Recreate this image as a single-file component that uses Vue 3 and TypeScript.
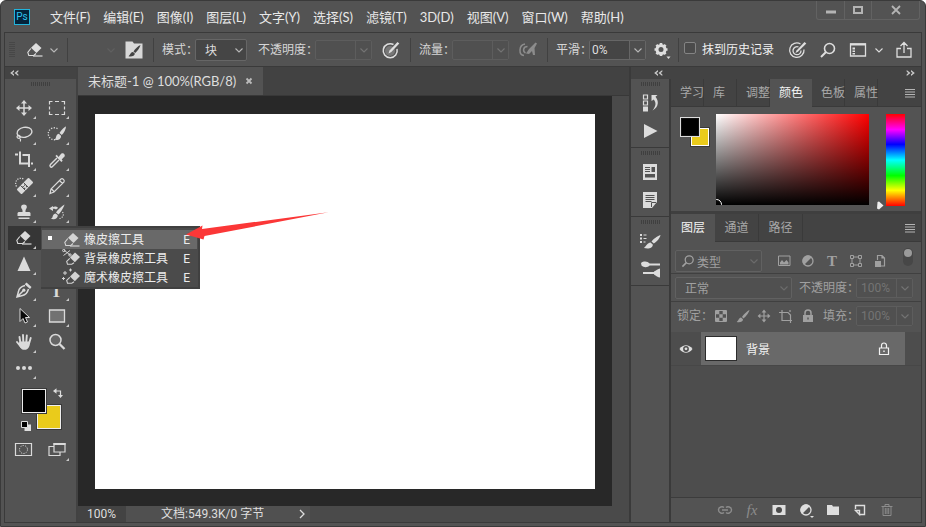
<script setup lang="ts">
import { ref } from 'vue'

interface Tool {
  id: string
  label: string
  glyph?: string
  more?: boolean
}

const menus: string[] = [
  '文件(F)', '编辑(E)', '图像(I)', '图层(L)', '文字(Y)', '选择(S)',
  '滤镜(T)', '3D(D)', '视图(V)', '窗口(W)', '帮助(H)',
]

const tools: Tool[] = [
  { id: 'move', label: '移动工具', more: true },
  { id: 'marquee', label: '矩形选框工具', more: true },
  { id: 'lasso', label: '套索工具', more: true },
  { id: 'quick', label: '快速选择工具', more: true },
  { id: 'crop', label: '裁剪工具', more: true },
  { id: 'dropper', label: '吸管工具', more: true },
  { id: 'heal', label: '修复画笔工具', more: true },
  { id: 'pencil', label: '铅笔工具', more: true },
  { id: 'stamp', label: '仿制图章工具', more: true },
  { id: 'history', label: '历史记录画笔工具', more: true },
  { id: 'eraser', label: '橡皮擦工具', more: true },
  { id: 'gradient', label: '渐变工具' },
  { id: 'sharpen', label: '锐化工具', more: true },
  { id: 'circle', label: '减淡工具' },
  { id: 'pen', label: '钢笔工具', more: true },
  { id: 'type', label: '文字工具', glyph: 'T', more: true },
  { id: 'arrow', label: '路径选择工具', more: true },
  { id: 'rect', label: '矩形工具', more: true },
  { id: 'hand', label: '抓手工具', more: true },
  { id: 'zoom', label: '缩放工具' },
  { id: 'dots', label: '编辑工具栏', more: true },
]

const eraserTools = [
  { id: 'eraser', name: '橡皮擦工具' },
  { id: 'eraser-cut', name: '背景橡皮擦工具' },
  { id: 'eraser-magic', name: '魔术橡皮擦工具' },
]

const colorTabs = ['学习', '库', '调整', '颜色', '色板', '属性']
const layerTabs = ['图层', '通道', '路径']
const dockGroups = [['hist', 'play'], ['card', 'note'], ['brushes', 'presets']]
const locks = ['checker', 'brush', 'move', 'artboard', 'lock']

const activeTool = ref('eraser')
const activeEraser = ref('eraser')
const activeColorTab = ref('颜色')
const activeLayerTab = ref('图层')
const eraseToHistory = ref(false)
</script>

<template>
  <div class="window">
    <svg class="sprite" aria-hidden="true">
      <symbol id="chev" viewBox="0 0 10 10"><path d="M1.500 3.500 5 7l3.500-3.500" fill="none" stroke="currentColor" stroke-width="1.100" /></symbol>
      <symbol id="collapse" viewBox="0 0 10 10"><path d="M5 2v1.700L3.400 5 5 6.300V8L1.200 5zM9.300 2v1.700L7.700 5l1.600 1.300V8L5.500 5z" fill="currentColor" /></symbol>
      <symbol id="eraser" viewBox="0 0 20 20">
        <path d="M11 3 16.500 8l-5 5L6 7.800z" fill="currentColor" />
        <path d="M5.800 8.500 2.800 12.300 3.800 15.500H8.800L11 13.500" fill="none" stroke="currentColor" stroke-width="1.100" />
        <path d="M8 16h9.500" stroke="currentColor" stroke-width="1.200" />
      </symbol>
      <symbol id="eraser-cut" viewBox="0 0 20 20">
        <path d="M13 3.500 18 8l-5.200 5.200L8 8.500z" fill="currentColor" />
        <path d="M7.800 9.300 4.700 12.300 5.500 15.300H9.800L12 13.800" fill="none" stroke="currentColor" stroke-width="1.100" />
        <path d="M2 1 8 6M1.500 6.500l6.500-5" stroke="currentColor" />
        <circle cx="1.800" cy="1.500" r="1.200" fill="none" stroke="currentColor" /><circle cx="8" cy="6" r="1.200" fill="none" stroke="currentColor" />
      </symbol>
      <symbol id="eraser-magic" viewBox="0 0 20 20">
        <path d="M13 3.500 18 8l-5.200 5.200L8 8.500z" fill="currentColor" />
        <path d="M7.800 9.300 4.700 12.300 5.500 15.300H9.800L12 13.800" fill="none" stroke="currentColor" stroke-width="1.100" />
        <path d="M3 3v4M1 5h4M8.500.5v3M7 2h3M1.500 9v3M0 10.500h3" stroke="currentColor" />
      </symbol>
      <symbol id="move" viewBox="0 0 20 20">
        <path d="M10 4v12M4 10h12" stroke="currentColor" stroke-width="1.500" />
        <path d="m10 2 3 3.500H7zM10 18l3-3.500H7zM2 10l3.500-3v6zM18 10l-3.500-3v6z" fill="currentColor" />
      </symbol>
      <symbol id="marquee" viewBox="0 0 20 20"><path d="M2.500 6.500v-3h3M8 3.500h4M14.500 3.500h3v3M17.500 8.500v3M17.500 13.500v3h-3M12 16.500H8M5.500 16.500h-3v-3M2.500 11.500v-3" fill="none" stroke="currentColor" stroke-width="1.200" /></symbol>
      <symbol id="lasso" viewBox="0 0 20 20">
        <ellipse cx="10.500" cy="8.300" rx="7.500" ry="5" transform="rotate(-10 10.500 8.300)" fill="none" stroke="currentColor" stroke-width="1.400" />
        <path d="M4 11.500c-2 1-.5 3.500 1.500 2.500s0-3-1.500-2.500M5.500 14c1.200 1 1.500 2 .8 3.500" fill="none" stroke="currentColor" stroke-width="1.200" />
      </symbol>
      <symbol id="quick" viewBox="0 0 20 20">
        <path d="M10.500 4.700A6 6 0 1 0 9 15.500" fill="none" stroke="currentColor" stroke-width="1.300" stroke-dasharray="1.300 1.400" />
        <path d="M19 2.500C17 3 13.500 7 12.500 9l2.300 2C17 9 19 5 19 2.500zM11.800 9.800c-2 .3-2.300 2-3 4-.3 1-1 1.500-1.800 1.700 3 1.200 7.300.3 7-3.700z" fill="currentColor" />
      </symbol>
      <symbol id="crop" viewBox="0 0 20 20"><path d="M1 4.500h3M6 1.500v12h8M8.500 5h6.500v12M17 13.500h2" fill="none" stroke="currentColor" stroke-width="2" /></symbol>
      <symbol id="dropper" viewBox="0 0 20 20">
        <path d="M11.500 7 13.500 4.500c2-3.500 6.500.5 3 3L14.700 9.500l1 1.200-1.300 1.300-6-6L9.800 4.700z" fill="currentColor" />
        <path d="m10 8-6.500 6.500c-1.500 2 .5 3.500 2 2L12 10" fill="none" stroke="currentColor" stroke-width="1.400" />
      </symbol>
      <symbol id="heal" viewBox="0 0 20 20">
        <path d="M14.500 3 18 6.500 7.500 17 4 13.500z" fill="currentColor" stroke="currentColor" stroke-width="2" stroke-linejoin="round" />
        <path d="m9.500 6.500 5 5M6.500 9.500l5 5" stroke="#535353" stroke-width="1" />
        <path d="M10 8.500h1.300v1.300H10zM12 10h1.300v1.300H12zM8.500 10h1.300v1.300H8.500zM10 11.800h1.300v1.300H10z" fill="#535353" />
        <path d="M2.500 10.500C-.5 5 5 .5 9.500 3" fill="none" stroke="currentColor" stroke-width="1.200" stroke-dasharray="1.200 1.300" />
      </symbol>
      <symbol id="pencil" viewBox="0 0 20 20"><path d="M3 17.500 4 13 14 3c1.500-1 4 1 3 3L7 16zM4.500 13l3 3M12.500 4.500l3 3" fill="none" stroke="currentColor" stroke-width="1.200" /></symbol>
      <symbol id="stamp" viewBox="0 0 20 20">
        <path d="M10 2.500c3.200 0 3.500 3 2 4.500-.6 1-.6 2-.5 3h4l1 1v3h-13v-3l1-1h4c.1-1 .1-2-.5-3-1.500-1.500-1.200-4.500 2-4.500zM4.500 15.500h11v1.500h-11z" fill="currentColor" />
      </symbol>
      <symbol id="history" viewBox="0 0 20 20">
        <path d="M17.500 2.500C15 4 10 8.500 9 10.500l2.500 2C14 10 17 5 17.500 2.500zM8.500 11.500c-2 .3-2.500 2-3 3.500-.3 1-1 1.500-1.800 1.700 3 1.200 7.300.3 7-3.700zM2 6.500 6 4v5zM5 5.500c3-1.500 5-1 6 .5L9 7.500c-1-1-2-1-4-.5z" fill="currentColor" />
        <path d="M15.500 10c2 3 0 6-3 6.500" fill="none" stroke="currentColor" stroke-width="1.200" stroke-dasharray="1.200 1.300" />
      </symbol>
      <symbol id="gradient" viewBox="0 0 20 20"><path d="M3 4h14v12H3z" fill="none" stroke="currentColor" /></symbol>
      <symbol id="sharpen" viewBox="0 0 20 20"><path d="M10 2.500 16.500 17h-13z" fill="currentColor" /></symbol>
      <symbol id="circle" viewBox="0 0 20 20"><circle cx="10" cy="10" r="6" fill="none" stroke="currentColor" /></symbol>
      <symbol id="pen" viewBox="0 0 20 20">
        <path d="M12.500 2.500 17.500 7 16 9 10.700 4.300z" fill="currentColor" />
        <path d="M11 5.500c-4 1-6 3-6.500 6L3 17l5.500-1.500c3-.5 5-3 6-6.500M3 17l6-6" fill="none" stroke="currentColor" stroke-width="1.500" />
        <circle cx="9.800" cy="10.200" r="1.600" fill="currentColor" />
      </symbol>
      <symbol id="arrow" viewBox="0 0 20 20"><path d="M6 2.500v13l3-3 2 4.500 2.500-1-2-4.500h4z" fill="#0a0a0a" stroke="currentColor" stroke-width="1" /></symbol>
      <symbol id="rect" viewBox="0 0 20 20"><path d="M2.500 4h15v12h-15z" fill="#727272" stroke="currentColor" stroke-width="1.300" /></symbol>
      <symbol id="hand" viewBox="0 0 20 20">
        <path d="M6.500 11.500 5.500 5M9.300 10 9 3M12.300 10l.5-6.500M15.200 11l1.500-5M3 10l4 5" fill="none" stroke="currentColor" stroke-width="1.900" stroke-linecap="round" />
        <path d="M5.600 9.500h10.500c0 5-1.800 8.300-5.500 8.300S6.500 15.500 4.500 12.500z" fill="currentColor" />
      </symbol>
      <symbol id="zoom" viewBox="0 0 20 20">
        <circle cx="8.500" cy="8" r="5.500" fill="#666" stroke="currentColor" stroke-width="1.500" />
        <path d="m12.500 12 5 5" stroke="currentColor" stroke-width="2.300" />
      </symbol>
      <symbol id="dots" viewBox="0 0 20 20"><g fill="currentColor"><circle cx="4" cy="10" r="2" /><circle cx="10" cy="10" r="2" /><circle cx="16" cy="10" r="2" /></g></symbol>
      <symbol id="swap" viewBox="0 0 10 10"><path d="M0 3 3.500.3v5.400zM7.500 10 5 7h5z" fill="currentColor" /><path d="M3 3h4.500v4" fill="none" stroke="currentColor" stroke-width="1.200" /></symbol>
      <symbol id="defaults" viewBox="0 0 10 10"><path d="M3.500 3.500H10V10H3.500z" fill="#ddd" /><path d="M.5.5h6v6h-6z" fill="#000" stroke="#ddd" /></symbol>
      <symbol id="mask" viewBox="0 0 20 20">
        <path d="M1.500 3.500h16v12h-16z" fill="none" stroke="currentColor" stroke-width="1.200" />
        <circle cx="9.500" cy="9.500" r="4" fill="none" stroke="currentColor" stroke-dasharray="1.200 1.300" />
      </symbol>
      <symbol id="screen" viewBox="0 0 20 20">
        <path d="M7 3.500h11v8.500H7zM7 6.500H2v9h11V12" fill="none" stroke="currentColor" stroke-width="1.200" /><path d="M6.500 4h12" stroke="currentColor" stroke-width="2" />
      </symbol>
      <symbol id="brushpanel" viewBox="0 0 20 20">
        <path d="M1.500 1.500h7l1.500 2h8.500v15h-17z" fill="#d8d8d8" />
        <path d="M16.500 5C14 6 11 9 9.500 11.500l1.700 1.400C13.500 11 16 7.500 16.500 5zM9 12c-2 0-2.500 2-4.500 4.300 3 .6 6.500-.3 6.300-2.800z" fill="#444" />
      </symbol>
      <symbol id="pressure" viewBox="0 0 20 20">
        <path d="M12.500 4.500A7 7 0 1 0 16 9" fill="none" stroke="currentColor" stroke-width="1.500" />
        <circle cx="9" cy="11" r="5" fill="#777" /><path d="M7.500 13.500 8.500 10.500 16.500 2l1.800 1.600L10.300 12z" fill="currentColor" />
      </symbol>
      <symbol id="target" viewBox="0 0 20 20">
        <path d="M12.500 4A7.200 7.200 0 1 0 16 9.500M10.500 7a4 4 0 1 0 2.500 3.500" fill="none" stroke="currentColor" stroke-width="1.300" />
        <path d="M7.500 13 8.500 10.500 16.500 2l1.800 1.600L10 11.800z" fill="currentColor" />
      </symbol>
      <symbol id="air" viewBox="0 0 20 20">
        <path d="M7 4C.5 5 .5 15 6 15.500M9.500 6.500C5 6.500 4.500 11.500 7.500 13" fill="none" stroke="currentColor" stroke-width="1.500" />
        <path d="m8 13.500 3-4.500L17.500 2.500l1.500 1-2.500 4.500.5 7h-2l-1-4-3 3z" fill="currentColor" />
      </symbol>
      <symbol id="gear" viewBox="0 0 20 20">
        <circle cx="9" cy="9.500" r="4" fill="none" stroke="currentColor" stroke-width="3" />
        <path d="M9 3v3M9 13v3M2.500 9.500h3M12.500 9.500h3M4.400 4.900l2 2M11.600 12.100l2 2M13.600 4.900l-2 2M6.400 12.100l-2 2" stroke="currentColor" stroke-width="2.600" />
        <path d="M14.500 16.500h4l-2 2.500z" fill="currentColor" />
      </symbol>
      <symbol id="search" viewBox="0 0 20 20"><circle cx="11.500" cy="8.500" r="5" fill="none" stroke="currentColor" stroke-width="1.600" /><path d="M8 12 3 17" stroke="currentColor" stroke-width="2" /></symbol>
      <symbol id="workspace" viewBox="0 0 20 20"><path d="M2.500 4h15v12h-15z" fill="none" stroke="currentColor" stroke-width="1.300" /><path d="M2 4.500h16" stroke="currentColor" stroke-width="2" /><path d="M4.500 7.500h2.500v2H4.500zM4.500 10.500h2.500v1.500H4.500zM4.500 13h2.500v1.500H4.500z" fill="currentColor" /></symbol>
      <symbol id="share" viewBox="0 0 20 20"><path d="M7 8.500H3v8.500h14V8.500h-4M10 13V3M6.500 6 10 2.500 13.500 6" fill="none" stroke="currentColor" stroke-width="1.300" /></symbol>
      <symbol id="burger" viewBox="0 0 12 10"><path d="M1 1.500h10M1 4h10M1 6.500h10M1 9h10" stroke="currentColor" /></symbol>
      <symbol id="hist" viewBox="0 0 20 20">
        <path d="M3.500 2h4v4h-4zM3.500 8h4v4h-4z" fill="none" stroke="currentColor" stroke-width="1.200" /><path d="M3 13.500h5v5H3zM11.500 2h6l-2 1.800C19 8 19 14 12.500 17.500c4-5 3.500-8 1.300-11L11.500 8z" fill="currentColor" />
      </symbol>
      <symbol id="play" viewBox="0 0 20 20"><path d="m4 3 13.500 7L4 17z" fill="currentColor" /></symbol>
      <symbol id="card" viewBox="0 0 20 20"><path d="M3 2h14v16H3z" fill="currentColor" /><path d="M5 5.500h5M5 7.500h5M5 9.500h5" stroke="#535353" /><path d="M11.500 5H15v5h-3.500zM5 12h10v3.500H5z" fill="#535353" /></symbol>
      <symbol id="note" viewBox="0 0 20 20"><path d="M3 2h14v10l-5 6H3z" fill="currentColor" /><path d="M5.500 5.500h9M5.500 7.500h9M5.500 9.500h9M5.500 11.500h6" stroke="#535353" /><path d="M11.500 17v-4.500H16" fill="none" stroke="#535353" /></symbol>
      <symbol id="brushes" viewBox="0 0 22 20">
        <path d="M1 3h2v2H1zM1 6.500h2v2H1zM1 10h2v2H1zM4.500 3.500h3v1h-3zM4.500 7h3v1h-3zM4.500 10.500h2v1h-2z" fill="currentColor" />
        <path d="M21.500 4C18 5 14 8.500 12.500 10.500l2.300 2C18 10.500 21 7 21.500 4zM11.500 11.500c-3 .3-4 3-6.500 5.500 4 1 9 .5 8.800-3.500z" fill="currentColor" />
      </symbol>
      <symbol id="presets" viewBox="0 0 22 20">
        <path d="M10 5.500h11M4 14h11" stroke="currentColor" stroke-width="1.800" />
        <path d="M2 4c3-2.500 7-1.500 8.500.5v2C9 8.500 5 9 2.500 6.500zM21 9.500c-2 .5-4 2-6 3v3c2 1 4 3 6 3z" fill="currentColor" />
      </symbol>
      <symbol id="image" viewBox="0 0 16 16"><path d="M2.500 3h11.500v9.500H2.500z" fill="none" stroke="currentColor" /><path d="M4 11.500V9.500L6 7l2 2.500L10.500 7l2 2.500v2z" fill="currentColor" /></symbol>
      <symbol id="adjust" viewBox="0 0 16 16"><circle cx="8" cy="8" r="5" fill="none" stroke="currentColor" stroke-width="1.300" /><path d="M12 4a5.600 5.600 0 1 0-8 8z" fill="currentColor" /></symbol>
      <symbol id="shape" viewBox="0 0 16 16"><path d="M4 4h8v8H4z" fill="none" stroke="currentColor" /><path d="M2.500 2.500h3v3h-3zM10.500 2.500h3v3h-3zM2.500 10.500h3v3h-3zM10.500 10.500h3v3h-3z" fill="#535353" stroke="currentColor" /></symbol>
      <symbol id="smart" viewBox="0 0 16 16"><path d="M5.500 7V2.500H10L12.500 5v8H9M10 2.500V5h2.500" fill="none" stroke="currentColor" stroke-width="1.200" /><path d="M3 8h6v6H3z" fill="currentColor" /></symbol>
      <symbol id="checker" viewBox="0 0 16 16"><path d="M2.500 2.500h11v11h-11z" fill="none" stroke="currentColor" /><path d="M3 3h3.300v3.300H3zM9.700 3H13v3.300H9.700zM6.300 6.300h3.400v3.400H6.300zM3 9.700h3.300V13H3zM9.700 9.700H13V13H9.700z" fill="currentColor" /></symbol>
      <symbol id="brush" viewBox="0 0 16 16"><path d="M14.500 2C12 3 8 7 7 9l1.600 1.400C11 8.500 14 4.500 14.500 2zM6 9.500c-2 .3-2 2.500-4.300 4.500 3 .6 6.300 0 6.300-2.800z" fill="currentColor" /></symbol>
      <symbol id="artboard" viewBox="0 0 16 16"><path d="M1 4.500h9l2.500 2.500V12M4 2v10.500h10M12.500 12.500V15M12 2v2" fill="none" stroke="currentColor" stroke-width="1.200" /></symbol>
      <symbol id="lock" viewBox="0 0 16 16"><path d="M5 8V5a3 3 0 0 1 6 0v3" fill="none" stroke="currentColor" stroke-width="1.500" /><path d="M3 7h10v7H3z" fill="currentColor" /><path d="M7.300 9.500h1.400v2H7.300z" fill="#535353" /></symbol>
      <symbol id="padlock" viewBox="0 0 16 16"><path d="M3.500 7h9v6.500h-9zM5.500 7V4.500a2.500 2.500 0 0 1 5 0V7" fill="none" stroke="currentColor" stroke-width="1.200" /><path d="M7.300 9.500h1.400v1.500H7.300z" fill="currentColor" /></symbol>
      <symbol id="eye" viewBox="0 0 16 16"><path d="M1.500 8C5 3 11 3 14.500 8 11 13 5 13 1.500 8z" fill="currentColor" /><circle cx="8" cy="8" r="2.900" fill="#4c4c4c" /><circle cx="8" cy="7.800" r="1.400" fill="currentColor" /></symbol>
      <symbol id="link" viewBox="0 0 16 16"><path d="M7 10.500c-1.500 1.300-5.500.8-5.500-2.500S5.500 4.200 7 5.500M9 5.500c1.500-1.300 5.500-.8 5.500 2.500s-4 3.800-5.500 2.500M5 8h6" fill="none" stroke="currentColor" stroke-width="1.400" /></symbol>
      <symbol id="addmask" viewBox="0 0 16 16"><path d="M1.500 3h13v10h-13z" fill="currentColor" /><circle cx="8" cy="8" r="3" fill="#4a4a4a" /></symbol>
      <symbol id="adjustnew" viewBox="0 0 16 16"><circle cx="8" cy="8" r="5" fill="none" stroke="currentColor" stroke-width="1.300" /><path d="M12 4a5.600 5.600 0 1 0-8 8zM12 14h4l-2 2z" fill="currentColor" /></symbol>
      <symbol id="folder" viewBox="0 0 16 16"><path d="M2 3h5l1 1.500h6V13H2z" fill="currentColor" /></symbol>
      <symbol id="newlayer" viewBox="0 0 16 16"><path d="M3.500 7V3.500h9v9H8M3.500 8.500h4v4z" fill="none" stroke="currentColor" stroke-width="1.400" /></symbol>
      <symbol id="trash" viewBox="0 0 16 16"><path d="M2.500 4.500h11M6 4V2.500h4V4M4 4.500v9h8v-9M6.300 6v6M8 6v6M9.700 6v6" fill="none" stroke="currentColor" /></symbol>
    </svg>

    <header class="titlebar">
      <span class="logo">Ps</span>
      <nav class="menus">
        <button v-for="m in menus" :key="m" type="button">{{ m }}</button>
      </nav>
      <div class="controls">
        <button type="button" aria-label="最小化"><svg width="12" height="10"><path d="M1 7h10" stroke="currentColor" stroke-width="3" /></svg></button>
        <button type="button" aria-label="最大化"><svg width="12" height="10"><path d="M2 2h8v6H2z" fill="none" stroke="currentColor" stroke-width="2" /></svg></button>
        <button type="button" class="close" aria-label="关闭"><svg width="12" height="10"><path d="m2 1 8 8M10 1 2 9" stroke="currentColor" stroke-width="1.800" /></svg></button>
      </div>
    </header>

    <div class="frame">
      <div class="options">
        <i class="vgrip"></i>
        <button type="button" class="opt" aria-label="当前工具"><svg class="i20"><use href="#eraser" /></svg></button>
        <svg class="i10 after-tool"><use href="#chev" /></svg>
        <i class="sep"></i>
        <svg class="i10 preset-chev"><use href="#chev" /></svg>
        <button type="button" class="opt" aria-label="画笔设置"><svg class="i20"><use href="#brushpanel" /></svg></button>
        <i class="sep wide"></i>
        <label class="lbl" for="mode">模式：</label>
        <span class="select mode">
          <select id="mode"><option>块</option></select>
          <svg class="i10"><use href="#chev" /></svg>
        </span>
        <label class="lbl" for="opacity">不透明度：</label>
        <span class="combo off"><input id="opacity" type="text" disabled><button type="button" disabled aria-label="展开"><svg class="i10"><use href="#chev" /></svg></button></span>
        <button type="button" class="opt side" aria-label="不透明度压力"><svg class="i20"><use href="#pressure" /></svg></button>
        <i class="sep"></i>
        <label class="lbl" for="flow">流量：</label>
        <span class="combo off"><input id="flow" type="text" disabled><button type="button" disabled aria-label="展开"><svg class="i10"><use href="#chev" /></svg></button></span>
        <button type="button" class="opt side dim" aria-label="喷枪"><svg class="i20"><use href="#air" /></svg></button>
        <i class="sep"></i>
        <label class="lbl" for="smooth">平滑：</label>
        <span class="combo"><input id="smooth" type="text" value="0%"><button type="button" aria-label="展开"><svg class="i10"><use href="#chev" /></svg></button></span>
        <button type="button" class="opt gear" aria-label="平滑选项"><svg class="i20"><use href="#gear" /></svg></button>
        <i class="sep tight"></i>
        <label class="check"><input v-model="eraseToHistory" type="checkbox">抹到历史记录</label>
        <div class="opt-right">
          <button type="button" class="opt" aria-label="大小压力"><svg class="i20"><use href="#target" /></svg></button>
          <button type="button" class="opt" aria-label="搜索"><svg class="i20"><use href="#search" /></svg></button>
          <button type="button" class="opt ws" aria-label="工作区"><svg class="i20"><use href="#workspace" /></svg><svg class="i10"><use href="#chev" /></svg></button>
          <button type="button" class="opt" aria-label="共享"><svg class="i20"><use href="#share" /></svg></button>
        </div>
      </div>

      <div class="main">
        <aside class="toolbox">
          <div class="strip"><svg class="i10"><use href="#collapse" /></svg></div>
          <i class="hgrip"></i>
          <div class="tools">
            <div v-for="t in tools" :key="t.id" class="cell">
              <button type="button" :class="{ on: activeTool === t.id, more: t.more }" :aria-label="t.label" @click="activeTool = t.id">
                <span v-if="t.glyph" class="tglyph">{{ t.glyph }}</span>
                <svg v-else class="i20"><use :href="'#' + t.id" /></svg>
              </button>
              <template v-if="t.id === 'eraser'">
                <div class="flyout">
                  <button v-for="e in eraserTools" :key="e.id" type="button" :class="{ on: activeEraser === e.id }" @click="activeEraser = e.id">
                    <i class="bullet"></i>
                    <svg class="i20"><use :href="'#' + e.id" /></svg>
                    <span class="name">{{ e.name }}</span>
                    <span>E</span>
                  </button>
                </div>
                <svg class="pointer" width="146" height="30" viewBox="0 0 146 30"><path d="M1 22.500 17.500 13.500 17 17 143.500.3 19.500 24 18.500 27.500z" fill="#fb3737" /></svg>
              </template>
            </div>
          </div>
          <div class="swatches">
            <button type="button" class="bg" aria-label="背景色"></button>
            <button type="button" class="fg" aria-label="前景色"></button>
            <svg class="i10 swap"><use href="#swap" /></svg>
            <svg class="i10 defaults"><use href="#defaults" /></svg>
          </div>
          <div class="tools">
            <div class="cell"><button type="button" aria-label="快速蒙版"><svg class="i20"><use href="#mask" /></svg></button></div>
            <div class="cell"><button type="button" class="more" aria-label="屏幕模式"><svg class="i20"><use href="#screen" /></svg></button></div>
          </div>
        </aside>

        <section class="doc">
          <div class="doctabs">
            <div class="doctab">未标题-1 @ 100%(RGB/8)
              <button type="button" aria-label="关闭文档"><svg width="8" height="8"><path d="m1.500 1.500 5 5M6.500 1.500l-5 5" stroke="currentColor" stroke-width="1.800" /></svg></button>
            </div>
          </div>
          <div class="view">
            <div class="stage"><div class="canvas"></div></div>
            <div class="scroll"></div>
          </div>
          <footer class="status">
            <span class="zoomval">100%</span>
            <span class="info">文档:549.3K/0 字节<svg width="6" height="10"><path d="m1 1 4 4-4 4" fill="none" stroke="currentColor" stroke-width="1.300" /></svg></span>
          </footer>
        </section>

        <section class="dock">
          <div class="strip wide"><svg class="i10"><use href="#collapse" /></svg><svg class="i10 flip"><use href="#collapse" /></svg></div>
          <div class="dockbody">
            <div class="iconcol">
              <div v-for="(g, n) in dockGroups" :key="n" class="group">
                <i class="hgrip"></i>
                <button v-for="ic in g" :key="ic" type="button" :aria-label="ic"><svg class="i22"><use :href="'#' + ic" /></svg></button>
              </div>
            </div>
            <div class="panels">
              <div class="tabs narrow">
                <button v-for="t in colorTabs" :key="t" type="button" :class="{ on: t === activeColorTab }" @click="activeColorTab = t">{{ t }}</button>
                <svg class="burger"><use href="#burger" /></svg>
              </div>
              <div class="color">
                <div class="miniswatch">
                  <button type="button" class="bg" aria-label="背景色"></button>
                  <button type="button" class="fg" aria-label="前景色"></button>
                </div>
                <div class="field"><i class="mark"></i></div>
                <div class="hue"><svg class="thumb" width="8" height="9"><path d="M1.500 1 3 .5 7.500 4.500 3 8.500 1 7.500z" fill="#eee" /></svg></div>
              </div>
              <div class="tabs">
                <button v-for="t in layerTabs" :key="t" type="button" :class="{ on: t === activeLayerTab }" @click="activeLayerTab = t">{{ t }}</button>
                <svg class="burger"><use href="#burger" /></svg>
              </div>
              <div class="row filter">
                <span class="select kind">
                  <svg class="i16 lens"><use href="#search" /></svg>
                  <select aria-label="类型"><option>类型</option></select>
                  <svg class="i10"><use href="#chev" /></svg>
                </span>
                <div class="filters">
                  <button type="button" aria-label="像素图层"><svg class="i16"><use href="#image" /></svg></button>
                  <button type="button" aria-label="调整图层"><svg class="i16"><use href="#adjust" /></svg></button>
                  <button type="button" class="serif" aria-label="文字图层">T</button>
                  <button type="button" aria-label="形状图层"><svg class="i16"><use href="#shape" /></svg></button>
                  <button type="button" aria-label="智能对象"><svg class="i16"><use href="#smart" /></svg></button>
                </div>
                <button type="button" class="toggle" aria-label="过滤开关"><i></i></button>
              </div>
              <div class="row blend">
                <span class="select grow">
                  <select aria-label="混合模式"><option>正常</option></select>
                  <svg class="i10"><use href="#chev" /></svg>
                </span>
                <label for="lop">不透明度：</label>
                <span class="combo off small"><input id="lop" type="text" value="100%" disabled><button type="button" disabled aria-label="展开"><svg class="i10"><use href="#chev" /></svg></button></span>
              </div>
              <div class="row locks">
                <span>锁定：</span>
                <div class="lockset">
                  <button v-for="l in locks" :key="l" type="button" :aria-label="'锁定 ' + l"><svg class="i16"><use :href="'#' + l" /></svg></button>
                </div>
                <label for="fill">填充：</label>
                <span class="combo off small"><input id="fill" type="text" value="100%" disabled><button type="button" disabled aria-label="展开"><svg class="i10"><use href="#chev" /></svg></button></span>
              </div>
              <div class="layers">
                <div class="layer">
                  <button type="button" class="eye" aria-label="可见性"><svg class="i16"><use href="#eye" /></svg></button>
                  <div class="layerbody">
                    <i class="thumbnail"></i>
                    <span>背景</span>
                    <svg class="i16"><use href="#padlock" /></svg>
                  </div>
                </div>
              </div>
              <div class="actions">
                <button type="button" class="dim" aria-label="链接图层"><svg class="i16"><use href="#link" /></svg></button>
                <button type="button" class="dim serif fx" aria-label="图层样式">fx</button>
                <button type="button" aria-label="添加蒙版"><svg class="i16"><use href="#addmask" /></svg></button>
                <button type="button" aria-label="新建调整图层"><svg class="i16"><use href="#adjustnew" /></svg></button>
                <button type="button" aria-label="新建组"><svg class="i16"><use href="#folder" /></svg></button>
                <button type="button" aria-label="新建图层"><svg class="i16"><use href="#newlayer" /></svg></button>
                <button type="button" class="dim" aria-label="删除图层"><svg class="i16"><use href="#trash" /></svg></button>
              </div>
            </div>
          </div>
        </section>
      </div>
    </div>
  </div>
</template>

<style>
body {
  background: #fff;
}
</style>

<style scoped>
* {
  box-sizing: border-box;
}
.window {
  display: flex;
  flex-direction: column;
  min-height: 100vh;
  padding: 0 3px 3px;
  border: 1px solid #3a3a3a;
  border-radius: 6px 6px 0 0;
  background: #535353;
  color: #dedede;
  font: 12px/16px Roboto, "Noto Sans CJK SC", sans-serif;
}
.sprite {
  position: absolute;
  width: 0;
  height: 0;
}
button, input, select {
  margin: 0;
  padding: 0;
  border: 0;
  background: none;
  color: inherit;
  font: inherit;
}
svg {
  display: block;
  flex: none;
}
i {
  display: block;
  flex: none;
}
.i10 { width: 10px; height: 10px; }
.i16 { width: 16px; height: 16px; }
.i20 { width: 20px; height: 20px; }
.i22 { width: 22px; height: 20px; }
.dim {
  color: #8c8c8c;
}

/* title bar */
.titlebar {
  display: flex;
  height: 31px;
  padding-left: 10px;
  align-items: center;
}
.logo {
  width: 16px;
  height: 16px;
  border: 1px solid #22b4dc;
  background: #04233a;
  color: #2fc4ee;
  font-size: 10px;
  line-height: 14px;
  text-align: center;
}
.menus {
  display: flex;
  flex: 1;
  gap: 13px;
  margin-left: 20px;
  color: #e8e8e8;
  font: 13px/20px Lato, "Noto Sans CJK SC", sans-serif;
  white-space: nowrap;
}
.controls {
  display: flex;
  align-self: flex-start;
  border: 1px solid #626262;
  border-top: 0;
  border-radius: 0 0 3px 3px;
  margin-right: 2px;
  color: #b4b4b4;
}
.controls button {
  display: grid;
  width: 27px;
  height: 18px;
  place-items: center;
  border-left: 1px solid #626262;
}
.controls button:first-child {
  border-left: 0;
}
.controls .close {
  width: 48px;
}

.frame {
  display: flex;
  flex: 1;
  flex-direction: column;
  border: 1px solid #3a3a3a;
}

/* options bar */
.options {
  display: flex;
  height: 34px;
  align-items: center;
  border-bottom: 1px solid #3a3a3a;
  white-space: nowrap;
}
.vgrip {
  width: 6px;
  height: 16px;
  margin: 0 10px 0 4px;
  background: repeating-linear-gradient(#474747 0 1px, transparent 1px 2px);
}
.after-tool {
  margin: 0 8px 0 4px;
  color: #b8b8b8;
}
.sep {
  width: 1px;
  height: 24px;
  margin-right: 8px;
  background: #414141;
}
.sep.wide {
  margin-left: 9px;
}
.sep.tight {
  margin-right: 5px;
}
.preset-chev {
  margin: 0 8px 0 30px;
  color: #606060;
}
.lbl {
  color: #d6d6d6;
}
.mode {
  width: 52px;
  height: 22px;
  margin-right: 11px;
  margin-left: -3px;
}
.select {
  display: grid;
  align-items: center;
  border: 1px solid #666;
  border-radius: 2px;
  background: #454545;
}
.select select {
  grid-area: 1 / 1;
  height: 20px;
  padding-top: 3px;
  padding-left: 9px;
  appearance: none;
  outline: 0;
}
.select > .i10 {
  grid-area: 1 / 1;
  justify-self: end;
  margin-right: 2px;
  color: #b8b8b8;
  pointer-events: none;
}
.combo {
  display: flex;
  width: 57px;
  height: 20px;
  margin-left: -3px;
  border: 1px solid #666;
  border-radius: 2px;
  background: #454545;
}
.combo input {
  flex: 1;
  min-width: 0;
  padding-left: 2px;
}
.combo button {
  display: grid;
  width: 16px;
  place-items: center;
  border-left: 1px solid #666;
  background: #4e4e4e;
  color: #b8b8b8;
}
.combo.off,
.combo.off button {
  border-color: #5d5d5d;
  background: #505050;
  color: #747474;
}
.side {
  margin: 0 9px;
}
.gear {
  margin: 0 6px;
}
.check {
  display: flex;
  align-items: center;
  gap: 6px;
  color: #f0f0f0;
}
.check input {
  width: 12px;
  height: 12px;
  margin-top: -3px;
  border: 1px solid #848484;
  border-radius: 2px;
  background: #4b4b4b;
  appearance: none;
}
.check input:checked {
  background: #ddd;
}
.opt-right {
  display: flex;
  gap: 10px;
  margin-right: 7px;
  margin-left: auto;
}
.ws {
  display: flex;
  align-items: center;
  gap: 6px;
}

/* main */
.main {
  display: flex;
  flex: 1;
}
.strip {
  display: flex;
  height: 12px;
  align-items: center;
  padding: 0 4px;
  background: #434343;
  color: #c8c8c8;
}
.strip.wide {
  justify-content: space-between;
  padding: 0 5px 0 22px;
}
.flip {
  transform: scaleX(-1);
}
.hgrip {
  width: 19px;
  height: 4px;
  margin: 3px auto;
  background: repeating-linear-gradient(90deg, #3f3f3f 0 1px, transparent 1px 2px);
}
.toolbox {
  display: flex;
  width: 73px;
  flex-direction: column;
  border-right: 2px solid #424242;
}
.tools {
  display: grid;
  grid-template-columns: 33px 33px;
  padding-left: 3px;
  margin-top: 6px;
}
.cell {
  position: relative;
  height: 26px;
}
.cell > button {
  position: relative;
  display: grid;
  width: 33px;
  height: 24px;
  margin-top: 1px;
  padding-right: 2px;
  place-items: center;
  color: #dadada;
}
.cell > button.on {
  background: #363636;
}
.cell > button.more::after {
  position: absolute;
  right: 5px;
  bottom: 1px;
  width: 3px;
  height: 3px;
  background: #c8c8c8;
  clip-path: polygon(100% 0, 100% 100%, 0 100%);
  content: "";
}
.tglyph {
  padding-top: 3px;
  font: bold 17px/20px "Liberation Serif", serif;
}
.flyout {
  position: absolute;
  z-index: 2;
  top: 1px;
  left: 33px;
  width: 159px;
  padding: 2px 1px 0;
  border: 2px solid #404040;
  border-left-width: 0;
  background: #4b4b4b;
}
.flyout button {
  display: flex;
  width: 100%;
  height: 19px;
  align-items: center;
  padding: 0 7px 0 6px;
  color: #ececec;
  text-align: left;
}
.flyout button svg {
  color: #d4d4d4;
}
.flyout button.on {
  background: #696969;
}
.bullet {
  width: 4px;
  height: 4px;
  margin: 0 10px 4px 0;
}
.on .bullet {
  background: #fff;
}
.flyout .name {
  flex: 1;
  padding-left: 2px;
  white-space: nowrap;
}
.pointer {
  position: absolute;
  z-index: 3;
  top: -13px;
  left: 177px;
}
.swatches {
  position: relative;
  height: 50px;
}
.swatches .fg,
.swatches .bg {
  position: absolute;
  top: 8px;
  left: 17px;
  width: 24px;
  height: 24px;
  border: 1px solid #eee;
  outline: 1px solid #3a3a3a;
  background: #000;
}
.swatches .bg {
  top: 24px;
  left: 32px;
  background: #eacb1b;
}
.swap {
  position: absolute;
  top: 7px;
  left: 48px;
  color: #ddd;
}
.defaults {
  position: absolute;
  top: 40px;
  left: 16px;
}

/* document */
.doc {
  display: flex;
  min-width: 0;
  flex: 1;
  flex-direction: column;
}
.doctabs {
  display: flex;
  height: 29px;
  border-bottom: 1px solid #383838;
  background: #424242;
}
.doctab {
  display: flex;
  align-items: center;
  gap: 9px;
  padding: 0 10px;
  background: #535353;
  font: 13px/20px Lato, "Noto Sans CJK SC", sans-serif;
  white-space: nowrap;
}
.doctab button {
  color: #bbb;
}
.view {
  display: flex;
  flex: 1;
}
.stage {
  display: flex;
  flex: 1;
  padding: 18px 17px 17px;
  background: #282828;
}
.canvas {
  flex: 1;
  background: #fff;
}
.scroll {
  width: 17px;
  background: #4a4a4a;
}
.status {
  display: flex;
  height: 16px;
  background: #4a4a4a;
  line-height: 17px;
}
.zoomval {
  width: 48px;
  padding-left: 9px;
  background: #434343;
}
.info {
  display: flex;
  width: 184px;
  align-items: center;
  justify-content: space-between;
  padding: 0 5px 0 35px;
  background: #505050;
  white-space: nowrap;
}

/* dock */
.dock {
  display: flex;
  flex-direction: column;
  border-left: 2px solid #3a3a3a;
}
.dockbody {
  display: flex;
  flex: 1;
}
.iconcol {
  width: 40px;
  border-right: 2px solid #3a3a3a;
}
.group {
  display: flex;
  height: 69px;
  flex-direction: column;
  align-items: center;
  border-bottom: 1px solid #3a3a3a;
  color: #dcdcdc;
}
.group button {
  display: grid;
  height: 28px;
  place-items: center;
}
.panels {
  display: flex;
  width: 250px;
  flex-direction: column;
}
.tabs {
  display: flex;
  height: 28px;
  border-bottom: 1px solid #3a3a3a;
  background: #434343;
  color: #a8a8a8;
}
.tabs button {
  width: 44px;
  border-right: 1px solid #3a3a3a;
  white-space: nowrap;
}
.tabs.narrow button {
  width: 33px;
  padding-left: 9px;
  text-align: left;
}
.tabs button.on {
  height: 28px;
  border-right: 0;
  background: #535353;
  color: #f4f4f4;
}
.tabs.narrow button.on {
  width: 42px;
}
.burger {
  width: 12px;
  height: 10px;
  margin: 9px 5px 0 auto;
  color: #b4b4b4;
}
.color {
  display: flex;
  align-items: flex-start;
  height: 107px;
  padding: 7px 16px 0 9px;
  border-bottom: 3px solid #3f3f3f;
}
.miniswatch {
  position: relative;
  width: 36px;
  height: 36px;
}
.miniswatch .fg,
.miniswatch .bg {
  position: absolute;
  top: 4px;
  left: 1px;
  width: 18px;
  height: 18px;
  border: 1px solid #111;
  outline: 1px solid #ddd;
  background: #000;
}
.miniswatch .bg {
  top: 14px;
  left: 11px;
  border-color: #fff;
  outline-color: #3a3a3a;
  background: #eacb1b;
}
.field {
  position: relative;
  overflow: hidden;
  flex: 1;
  height: 91px;
  margin-right: 17px;
  background: linear-gradient(transparent, #000), linear-gradient(90deg, #fff, #f00);
}
.mark {
  position: absolute;
  bottom: -5px;
  left: -5px;
  width: 11px;
  height: 11px;
  border: 1px solid #fff;
  border-radius: 50%;
}
.hue {
  position: relative;
  width: 19px;
  height: 92px;
  background: linear-gradient(#f00, #f0f 17%, #00f 33%, #0ff 50%, #0f0 67%, #ff0 83%, #f00);
}
.thumb {
  position: absolute;
  bottom: -4px;
  left: -10px;
}
.row {
  display: flex;
  align-items: center;
  padding: 0 8px 0 4px;
  color: #a0a0a0;
  white-space: nowrap;
}
.row .select {
  border-color: #616161;
  background: #505050;
}
.row .select > .i10 {
  color: #6c6c6c;
}
.filter {
  height: 32px;
  padding-top: 7px;
  border-bottom: 1px solid #404040;
}
.kind {
  width: 87px;
  height: 22px;
}
.kind select {
  padding-left: 21px;
}
.select > .lens {
  grid-area: 1 / 1;
  margin-left: 4px;
}
.filters {
  display: flex;
  flex: 1;
  justify-content: space-between;
  padding: 0 15px 0 14px;
}
.filters button {
  width: 16px;
}
.serif {
  font: bold 15px/16px "Liberation Serif", serif;
}
.toggle {
  width: 10px;
  height: 18px;
  margin-bottom: 8px;
  border-radius: 5px;
  background: #474747;
}
.toggle i {
  width: 8px;
  height: 8px;
  margin: 0 1px 9px;
  border-radius: 50%;
  background: #9a9a9a;
}
.blend {
  height: 28px;
  border-bottom: 1px solid #404040;
}
.grow {
  flex: 1;
  height: 22px;
  margin-right: 7px;
}
.combo.small input {
  padding-left: 4px;
}
.locks {
  height: 30px;
  padding-bottom: 2px;
  padding-left: 6px;
}
.lockset {
  display: flex;
  flex: 1;
  justify-content: space-between;
  padding: 0 7px 0 0;
}
.layers {
  flex: 1;
  background: #4d4d4d;
}
.layer {
  display: flex;
  height: 34px;
  padding-right: 16px;
  border-bottom: 1px solid #474747;
}
.eye {
  display: grid;
  width: 30px;
  place-items: center;
}
.layerbody {
  display: flex;
  flex: 1;
  align-items: center;
  padding: 0 13px 0 4px;
  background: #696969;
  color: #f2f2f2;
}
.thumbnail {
  width: 32px;
  height: 25px;
  margin-right: 9px;
  border: 1px solid #2c2c2c;
  background: #fff;
}
.layerbody span {
  flex: 1;
  padding-top: 3px;
}
.actions {
  display: flex;
  height: 25px;
  align-items: center;
  justify-content: flex-end;
  gap: 11px;
  padding-right: 26px;
  border-top: 1px solid #3c3c3c;
}
.actions button {
  width: 16px;
}
.actions .fx {
  font-style: italic;
  font-weight: normal;
}
</style>
